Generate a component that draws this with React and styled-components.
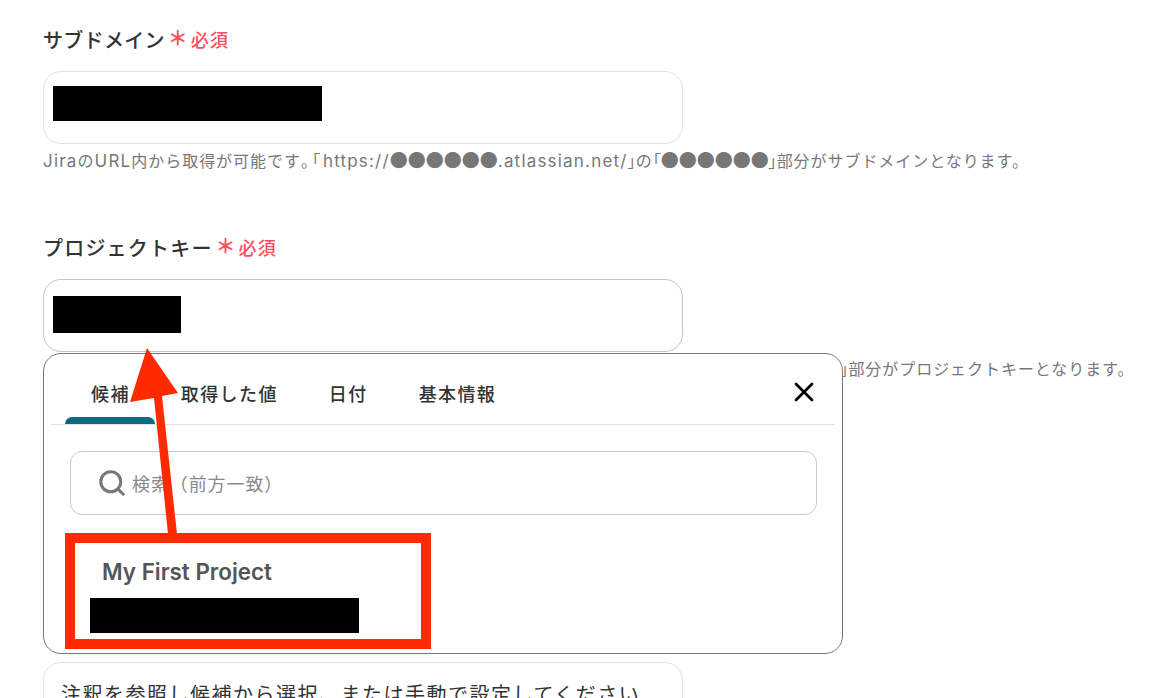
import React from "react";
import styled, { createGlobalStyle } from "styled-components";
import { Search, X } from "lucide-react";

const GlobalStyle = createGlobalStyle`
  html, body {
    margin: 0;
    height: 100%;
    background: #fff;
    overflow: hidden;
  }
  body {
    font-family: Inter, "Noto Sans CJK JP", sans-serif;
  }
`;

const Page = styled.div`
  position: relative;
  height: 698px;
  overflow: hidden;
  padding: 26px 0 0 43px;
  box-sizing: border-box;
`;

const Field = styled.section`
  position: relative;
  margin-bottom: ${(p) => p.$gap || 0}px;
`;

const LabelRow = styled.div`
  display: flex;
  align-items: center;
  height: 27px;
  font-size: 20px;
  font-weight: 500;
  letter-spacing: ${(p) => p.$spacing}px;
  color: #333;
`;

const Asterisk = styled.span`
  margin-left: 3px;
  font-size: 20px;
  font-weight: 700;
  line-height: 27px;
  letter-spacing: 0;
  color: #ff4d5e;
`;

const Required = styled.span`
  margin: -2px 0 0 3px;
  font-size: 18px;
  font-weight: 500;
  letter-spacing: 1.2px;
  color: #ff4d5e;
`;

const InputBox = styled.div`
  width: 640px;
  height: 73px;
  margin-top: 18px;
  padding: 0 0 ${(p) => p.$lift || 0}px 9px;
  box-sizing: border-box;
  display: flex;
  align-items: center;
  background: #fff;
  border: 1px solid ${(p) => (p.$strong ? "#c4c4c4" : "#e2e2e2")};
  border-radius: 18px;
`;

const Redaction = styled.div`
  width: ${(p) => p.$w}px;
  height: ${(p) => p.$h}px;
  background: #000;
`;

const Hint = styled.p`
  margin: 5px 0 0;
  font-size: 16px;
  line-height: 20px;
  letter-spacing: 0.95px;
  white-space: nowrap;
  color: #777;
`;

const Latin = styled.span`
  font-size: 17px;
  letter-spacing: 1.2px;
`;

const Dots = styled.span`
  font-family: "Noto Sans CJK JP", sans-serif;
  font-size: 18px;
  letter-spacing: 0;
`;

const Punct = styled.span`
  font-feature-settings: "palt";
  letter-spacing: ${(p) => p.$spacing || 0}px;
`;

const Popover = styled.div`
  position: absolute;
  left: 0;
  top: 119px;
  z-index: 2;
  width: 800px;
  height: 301px;
  box-sizing: border-box;
  padding: 0 7px;
  background: #fff;
  border: 1px solid #777;
  border-radius: 18px;
`;

const TabBar = styled.div`
  position: relative;
  display: flex;
  height: 70px;
  padding-left: 14px;
  border-bottom: 1px solid #e2e2e2;
`;

const Tab = styled.div`
  position: relative;
  padding: 7px 25px 0 26px;
  display: flex;
  align-items: center;
  font-size: 18px;
  font-weight: 500;
  letter-spacing: 1.4px;
  color: #333;

  ${(p) =>
    p.$active &&
    `
    &::after {
      content: "";
      position: absolute;
      left: 0;
      right: 0;
      bottom: 0;
      height: 7px;
      background: #0a6a84;
      border-radius: 7px 7px 0 0;
    }
  `}
`;

const CloseButton = styled.div`
  position: absolute;
  right: 15px;
  top: 22px;
  display: flex;
  color: #000;
`;

const SearchBox = styled.div`
  display: flex;
  align-items: center;
  height: 64px;
  margin: 26px 18px 0 19px;
  padding-left: 26px;
  box-sizing: border-box;
  border: 1px solid #c9c9c9;
  border-radius: 12px;
  color: #777;
`;

const Placeholder = styled.span`
  margin-left: 5px;
  font-size: 18px;
  letter-spacing: 0.9px;
  color: #8a8a8a;
`;

const ResultItem = styled.div`
  width: 366px;
  height: 116px;
  margin: 18px 0 0 14px;
  box-sizing: border-box;
  padding: 14px 0 0 15px;
  border: 10px solid #ff2a00;
`;

const ResultTitle = styled.div`
  padding-left: 12px;
  font-size: 22.4px;
  line-height: 30px;
  font-weight: 600;
  color: #555;
`;

const ResultKey = styled.div`
  margin-top: 11px;
`;

const NoteBox = styled(InputBox)`
  margin-top: 0;
  padding: 18px 0 0 17px;
  align-items: flex-start;
  font-size: 20px;
  line-height: 28px;
  letter-spacing: 1.5px;
  color: #333;
  white-space: nowrap;
`;

const ArrowOverlay = styled.svg`
  position: absolute;
  left: 0;
  top: 0;
  z-index: 3;
  pointer-events: none;
`;

const App = () => {
  return (
    <Page>
      <GlobalStyle />
      <Field $gap={63}>
        <LabelRow $spacing={0.3}>
          サブドメイン
          <Asterisk>＊</Asterisk>
          <Required>必須</Required>
        </LabelRow>
        <InputBox $lift={8}>
          <Redaction $w={269} $h={35} />
        </InputBox>
        <Hint>
          <Latin>Jira</Latin>の<Latin>URL</Latin>内から取得が可能です
          <Punct $spacing={3}>。「</Punct>
          <Latin>https://</Latin>
          <Dots>●●●●●●</Dots>
          <Latin>.atlassian.net/</Latin>
          <Punct>」</Punct>の<Punct>「</Punct>
          <Dots>●●●●●●</Dots>
          <Punct>」</Punct>部分がサブドメインとなります。
        </Hint>
      </Field>

      <Field $gap={283}>
        <LabelRow $spacing={1.2}>
          プロジェクトキー
          <Asterisk>＊</Asterisk>
          <Required>必須</Required>
        </LabelRow>
        <InputBox $strong $lift={2}>
          <Redaction $w={128} $h={37} />
        </InputBox>
        <Hint>
          <Latin>Jira</Latin>の<Latin>URL</Latin>内から取得が可能です
          <Punct $spacing={3}>。「</Punct>
          <Latin>https://</Latin>
          <Dots>●●●●●●</Dots>
          <Latin>.atlassian.net/project/</Latin>
          <Dots>●●●</Dots>
          <Punct>」</Punct>の<Punct>「</Punct>
          <Dots>●●●</Dots>
          <Punct>」</Punct>部分がプロジェクトキーとなります。
        </Hint>
        <Popover>
          <TabBar>
            <Tab $active>候補</Tab>
            <Tab>取得した値</Tab>
            <Tab>日付</Tab>
            <Tab>基本情報</Tab>
            <CloseButton>
              <X size={32} strokeWidth={2} />
            </CloseButton>
          </TabBar>
          <SearchBox>
            <Search size={30} strokeWidth={2.4} />
            <Placeholder>検索（前方一致）</Placeholder>
          </SearchBox>
          <ResultItem>
            <ResultTitle>My First Project</ResultTitle>
            <ResultKey>
              <Redaction $w={269} $h={35} />
            </ResultKey>
          </ResultItem>
        </Popover>
      </Field>

      <NoteBox>注釈を参照し候補から選択、または手動で設定してください</NoteBox>

      <ArrowOverlay width="1158" height="698" viewBox="0 0 1158 698">
        <path
          d="M147 348 L178 393 L162 396 L177 534 L168 534 L154 398 L130 402 Z"
          fill="#ff2a00"
        />
      </ArrowOverlay>
    </Page>
  );
};

export default App;
